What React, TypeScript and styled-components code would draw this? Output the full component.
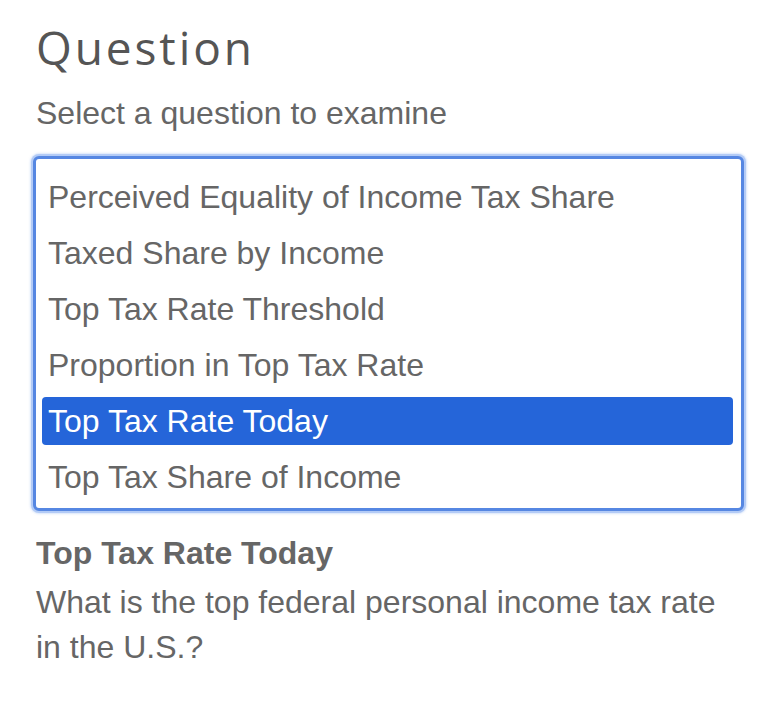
import React, { useState } from "react";
import styled, { createGlobalStyle } from "styled-components";

const questions = [
  {
    title: "Perceived Equality of Income Tax Share",
    text: "How equal do people think the share of income tax paid is?",
  },
  { title: "Taxed Share by Income", text: "What share of income is taxed?" },
  { title: "Top Tax Rate Threshold", text: "At what income does the top tax rate begin?" },
  { title: "Proportion in Top Tax Rate", text: "What proportion of people pay the top tax rate?" },
  {
    title: "Top Tax Rate Today",
    text: "What is the top federal personal income tax rate in the U.S.?",
  },
  { title: "Top Tax Share of Income", text: "What share of income goes to the top tax rate?" },
];

const GlobalStyle = createGlobalStyle`
  html, body {
    margin: 0;
    padding: 0;
    background: #fff;
  }
  body {
    font-family: "Liberation Sans", Arial, sans-serif;
    color: #666;
  }
`;

const Page = styled.div`
  width: 770px;
  padding: 20px 24px 0 36px;
  box-sizing: border-box;
`;

const Heading = styled.h1`
  margin: 0;
  font-family: "Open Sans", "Noto Sans", sans-serif;
  font-weight: 400;
  font-size: 46px;
  line-height: 54px;
  letter-spacing: 2.9px;
  color: #555;
`;

const Hint = styled.p`
  margin: 20px 0 24px;
  font-size: 32px;
  line-height: 38px;
  color: #666;
`;

const ListBox = styled.div`
  margin-left: -3px;
  width: 711px;
  height: 355px;
  box-sizing: border-box;
  padding: 14px 8px 6px 6px;
  border: 3px solid #5687e2;
  border-radius: 6px;
  box-shadow: 0 0 0 2px #b3cbf6, 0 0 2px 3px rgba(179, 203, 246, 0.5);
  display: flex;
  flex-direction: column;
  gap: 8px;
  background: #fff;
`;

const Option = styled.div<{ $selected: boolean }>`
  height: 48px;
  flex-shrink: 0;
  display: flex;
  align-items: center;
  padding-left: 6px;
  border-radius: 4px;
  font-size: 32px;
  color: ${({ $selected }) => ($selected ? "#fff" : "#666")};
  background: ${({ $selected }) => ($selected ? "#2565d9" : "transparent")};
  cursor: default;
  user-select: none;
  white-space: nowrap;
`;

const Detail = styled.div`
  margin-top: 22px;
  width: 700px;
`;

const DetailTitle = styled.div`
  font-weight: 700;
  font-size: 32px;
  line-height: 40px;
  color: #666;
`;

const DetailText = styled.div`
  margin-top: 7px;
  font-size: 32px;
  line-height: 45px;
  color: #666;
`;

export default function App() {
  const [selected, setSelected] = useState(4);
  const current = questions[selected];

  return (
    <>
      <GlobalStyle />
      <Page>
        <Heading>Question</Heading>
        <Hint>Select a question to examine</Hint>
        <ListBox role="listbox">
          {questions.map((q, i) => (
            <Option
              key={q.title}
              role="option"
              aria-selected={i === selected}
              $selected={i === selected}
              onClick={() => setSelected(i)}
            >
              {q.title}
            </Option>
          ))}
        </ListBox>
        <Detail>
          <DetailTitle>{current.title}</DetailTitle>
          <DetailText>{current.text}</DetailText>
        </Detail>
      </Page>
    </>
  );
}
